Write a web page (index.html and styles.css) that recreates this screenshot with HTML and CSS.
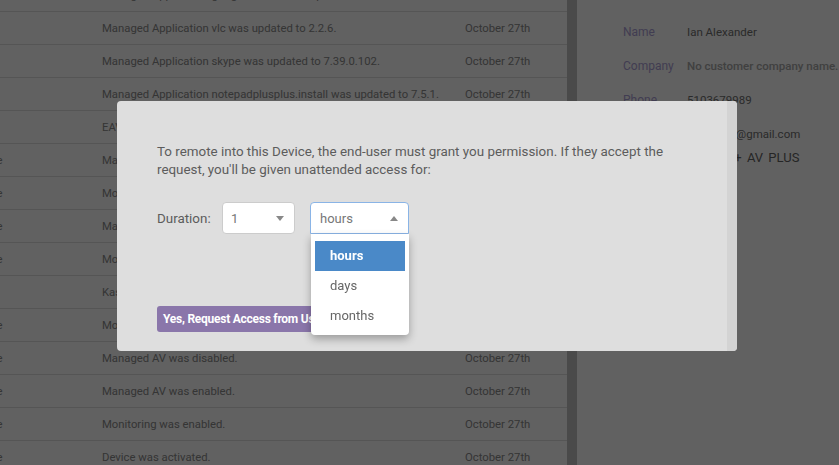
FILE: index.html
```html
<!DOCTYPE html>
<html lang="en">
<head>
    <meta charset="UTF-8">
    <meta name="viewport" content="width=device-width, initial-scale=1.0">
    <title>Device - Remote Access</title>
    <link rel="stylesheet" href="styles.css">
</head>
<body>
    <div class="page">
        <section class="activity">
            <table class="activity-table">
                <tr><td class="who"></td><td>Managed Application googlechrome was updated to 62.0.3202.62.</td><td class="date">October 27th</td></tr>
                <tr><td class="who"></td><td>Managed Application vlc was updated to 2.2.6.</td><td class="date">October 27th</td></tr>
                <tr><td class="who"></td><td>Managed Application skype was updated to 7.39.0.102.</td><td class="date">October 27th</td></tr>
                <tr><td class="who"></td><td>Managed Application notepadplusplus.install was updated to 7.5.1.</td><td class="date">October 27th</td></tr>
                <tr><td class="who"></td><td>EAV was installed.</td><td class="date">October 27th</td></tr>
                <tr><td class="who">Device</td><td>Managed Application 7zip was installed.</td><td class="date">October 27th</td></tr>
                <tr><td class="who">Device</td><td>Monitoring was disabled.</td><td class="date">October 27th</td></tr>
                <tr><td class="who">Device</td><td>Managed AV was installed.</td><td class="date">October 27th</td></tr>
                <tr><td class="who">Device</td><td>Monitoring was enabled.</td><td class="date">October 27th</td></tr>
                <tr><td class="who"></td><td>Kaseya agent was installed.</td><td class="date">October 27th</td></tr>
                <tr><td class="who">Device</td><td>Monitoring was disabled.</td><td class="date">October 27th</td></tr>
                <tr><td class="who">Device</td><td>Managed AV was disabled.</td><td class="date">October 27th</td></tr>
                <tr><td class="who">Device</td><td>Managed AV was enabled.</td><td class="date">October 27th</td></tr>
                <tr><td class="who">Device</td><td>Monitoring was enabled.</td><td class="date">October 27th</td></tr>
                <tr><td class="who">Device</td><td>Device was activated.</td><td class="date">October 27th</td></tr>
            </table>
        </section>
        <div class="page-scroll"></div>
        <aside class="details">
            <div class="row"><span class="label">Name</span><span class="value">Ian Alexander</span></div>
            <div class="row"><span class="label">Company</span><span class="value muted">No customer company name.</span></div>
            <div class="row"><span class="label">Phone</span><span class="value">5103679989</span></div>
            <div class="row"><span class="label">Email</span><span class="value">ianalexan@gmail.com</span></div>
            <div class="row plan"><span class="label">Plan</span><span class="value plan-value">Protect + AV PLUS</span></div>
        </aside>
    </div>

    <div class="backdrop"></div>

    <div class="modal">
        <div class="modal-body">
            <p class="modal-text">To remote into this Device, the end-user must grant you permission. If they accept the request, you'll be given unattended access for:</p>
            <div class="duration">
                <span class="duration-label">Duration:</span>
                <div class="select select-number">
                    <span>1</span>
                    <span class="arrow down"></span>
                </div>
                <div class="select select-unit open">
                    <span>hours</span>
                    <span class="arrow up"></span>
                    <ul class="dropdown">
                        <li class="active">hours</li>
                        <li>days</li>
                        <li>months</li>
                    </ul>
                </div>
            </div>
            <div class="actions">
                <button class="btn-primary">Yes, Request Access from User</button>
            </div>
        </div>
        <div class="modal-scroll"></div>
    </div>
</body>
</html>
```

FILE: styles.css
```css
body {
    margin: 0;
    font-family: Roboto, "Liberation Sans", sans-serif;
    background-color: #f2f2f2;
    overflow: hidden;
}

.page {
    display: flex;
    height: 465px;
}

.activity {
    width: 567px;
    overflow: hidden;
}

.activity-table {
    margin-top: -21px;
    border-collapse: collapse;
    width: 100%;
    font-size: 11.3px;
    color: #848484;
}

.activity-table td {
    height: 32px;
    padding: 0;
    border-bottom: 1px solid #d4d4d4;
    white-space: nowrap;
}

.activity-table .who {
    width: 102px;
    text-indent: -31px;
    overflow: hidden;
}

.activity-table .date {
    width: 102px;
}

.page-scroll {
    width: 10px;
    background-color: #b9b9b9;
}

.details {
    flex: 1;
    padding: 15px 0 0 46px;
    overflow: hidden;
}

.row {
    display: flex;
    line-height: 34px;
    white-space: nowrap;
}

.row.plan {
    line-height: 14px;
}

.label {
    flex-shrink: 0;
    width: 64px;
    font-size: 12px;
    color: #a298cc;
}

.value {
    font-size: 11.5px;
    color: #6a6a6a;
}

.value.muted {
    color: #a0a0a0;
    font-weight: 500;
}

.plan-value {
    font-size: 13px;
    word-spacing: 2px;
    color: #5e5e5e;
}

.backdrop {
    position: fixed;
    inset: 0;
    background-color: rgba(0, 0, 0, 0.6);
}

.modal {
    position: absolute;
    left: 117px;
    top: 101px;
    width: 620px;
    height: 250px;
    display: flex;
    background-color: #dedede;
    border-radius: 4px;
}

.modal-body {
    flex: 1;
    padding: 42px 0 0 40px;
}

.modal-scroll {
    width: 10px;
    background-color: #d3d3d3;
    border-radius: 0 4px 4px 0;
}

.modal-text {
    margin: 0;
    width: 530px;
    font-size: 13.4px;
    line-height: 18px;
    color: #5c5c5c;
}

.duration {
    display: flex;
    align-items: center;
    margin-top: 23px;
    font-size: 13.4px;
    color: #5c5c5c;
}

.duration-label {
    width: 65px;
}

.select {
    position: relative;
    box-sizing: border-box;
    height: 32px;
    display: flex;
    align-items: center;
    padding-left: 8px;
    background-color: #fff;
    border: 1px solid #ccc;
    border-radius: 4px;
    color: #777;
    font-size: 13px;
}

.select-number {
    width: 73px;
    margin-right: 15px;
}

.select-unit {
    width: 99px;
    padding-left: 9px;
}

.select.open {
    border-color: #8ab4e6;
    border-radius: 4px 4px 0 0;
}

.arrow {
    position: absolute;
    right: 10px;
    top: 13px;
    width: 0;
    height: 0;
    border-left: 4px solid transparent;
    border-right: 4px solid transparent;
}

.arrow.down {
    border-top: 5px solid #888;
}

.arrow.up {
    border-bottom: 5px solid #888;
}

.dropdown {
    position: absolute;
    top: 31px;
    left: 0;
    width: 98px;
    height: 101px;
    box-sizing: border-box;
    margin: 0;
    padding: 7px 4px;
    list-style: none;
    background-color: #fff;
    border-radius: 0 0 4px 4px;
    box-shadow: 0 4px 8px rgba(0, 0, 0, 0.3);
    z-index: 2;
}

.dropdown li {
    height: 30px;
    line-height: 30px;
    padding-left: 15px;
    color: #666;
}

.dropdown li.active {
    background-color: #4a89c8;
    color: #fff;
    font-weight: bold;
}

.actions {
    margin-top: 72px;
}

.btn-primary {
    height: 26px;
    padding: 0 8px 0 6px;
    font-family: inherit;
    font-size: 12px;
    font-weight: bold;
    letter-spacing: -0.25px;
    color: #fff;
    background-color: #8a76aa;
    border: none;
    border-radius: 3px;
}
```
